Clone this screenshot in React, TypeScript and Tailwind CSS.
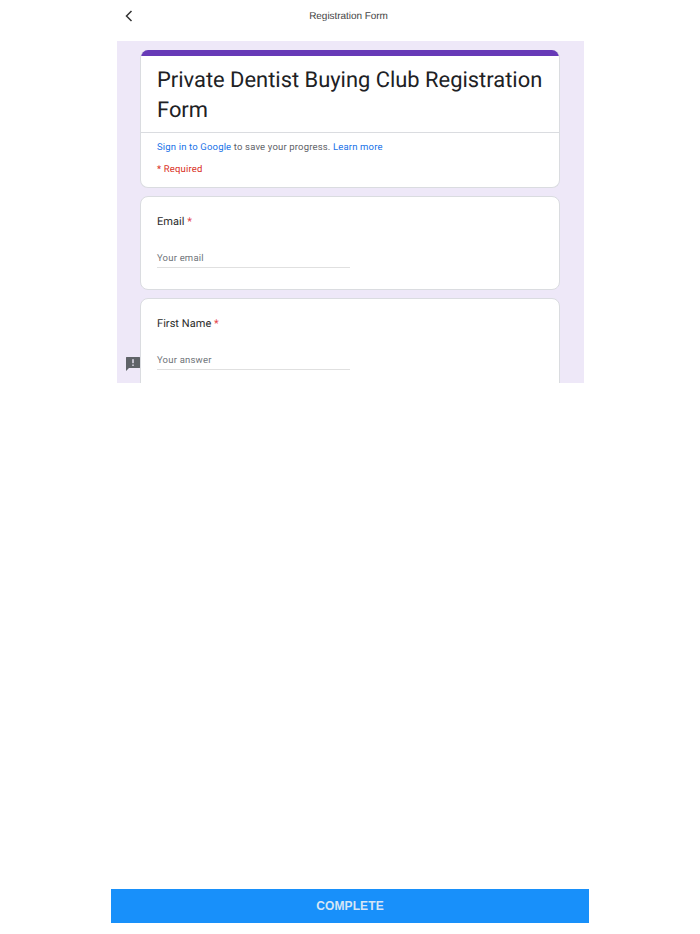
import React from 'react';

const roboto = 'font-["Roboto",sans-serif]';

const Question = ({ label, placeholder }: { label: string; placeholder: string }) => (
  <div className="w-[420px] shrink-0 rounded-lg border border-[#dadce0] bg-white pl-4 pt-[15px]">
    <div className="text-[11px] leading-[20px] tracking-[0.05px] text-[#2c2c2c]">
      {label} <span className="text-[#e5484d]">*</span>
    </div>
    <div className="mt-[10px] w-[193px] border-b border-[#e0e0e0] pt-[9px] text-[9.5px] leading-[16px] tracking-[0.2px] text-[#70757a]">
      {placeholder}
    </div>
  </div>
);

export default function App() {
  return (
    <div className={`flex h-[934px] w-[700px] flex-col items-center bg-white [text-rendering:geometricPrecision] ${roboto}`}>
      <header className="relative flex h-[41px] w-[467px] shrink-0 items-center justify-center pb-[9px] pr-[3px]">
        <button className="absolute left-[3px] top-[7px] text-[#333]">
          <svg width="18" height="18" viewBox="0 0 18 18" fill="none" stroke="currentColor" strokeWidth="1.5">
            <path d="M11.5 4 L6.5 9 L11.5 14" />
          </svg>
        </button>
        <span className='font-["Liberation_Sans",sans-serif] text-[10px] tracking-[-0.05px] text-[#444]'>Registration Form</span>
      </header>

      <main className="relative flex h-[342px] w-[467px] shrink-0 flex-col items-center gap-2 overflow-hidden bg-[#eee8f8] pt-[9px]">
        <div className="w-[420px] shrink-0 overflow-hidden rounded-lg border border-t-0 border-[#dadce0] bg-white">
          <div className="h-[6px] bg-[#673ab7]" />
          <div className="border-b border-[#dadce0] pb-[7px] pl-4 pr-1 pt-[10px] text-[21.9px] leading-[29.5px] text-[#202124]">
            Private Dentist Buying Club Registration Form
          </div>
          <div className="px-4 pb-[9px] pt-[7px] text-[9.5px] leading-[16px] tracking-[0.16px] text-[#5f6368]">
            <div>
              <span className="text-[#1a73e8]">Sign in to Google</span> to save your progress.{' '}
              <span className="text-[#1a73e8]">Learn more</span>
            </div>
            <div className="mt-[6px] text-[#d93025]">* Required</div>
          </div>
        </div>

        <div className="h-[94px] w-[420px] shrink-0 [&>div]:h-full">
          <Question label="Email" placeholder="Your email" />
        </div>
        <div className="h-[120px] w-[420px] shrink-0 [&>div]:h-full">
          <Question label="First Name" placeholder="Your answer" />
        </div>

        {/* feedback icon floats over the form */}
        <svg className="absolute left-[8px] top-[315px] text-[#5f6368]" width="16" height="16" viewBox="0 0 16 16">
          <path
            fill="currentColor"
            d="M1.5 1h13a.5.5 0 0 1 .5.5v10a.5.5 0 0 1-.5.5H4l-3 3V1.500a.5.5 0 0 1 .500-.5z"
          />
          <rect x="7.300" y="3.200" width="1.400" height="4" fill="#eee8f8" />
          <rect x="7.300" y="8.500" width="1.400" height="1.400" fill="#eee8f8" />
        </svg>
      </main>

      <button className='mb-[11px] mt-auto h-[34px] w-[478px] shrink-0 bg-[#1890fa] font-["Liberation_Sans",sans-serif] text-[12px] font-bold tracking-[0.1px] text-[#d5e5f5]'>
        COMPLETE
      </button>
    </div>
  );
}
